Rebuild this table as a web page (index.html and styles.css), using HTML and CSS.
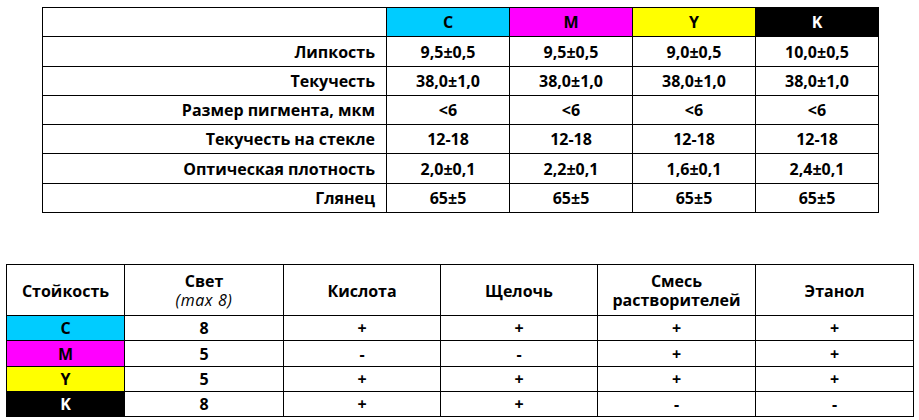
FILE: index.html
```html
<!DOCTYPE html>
<html lang="ru">
<head>
<meta charset="utf-8">
<title>Характеристики красок</title>
<link rel="stylesheet" href="styles.css">
</head>
<body>
<div class="page">
  <table class="props">
    <colgroup>
      <col class="c-label"><col class="c-val"><col class="c-val"><col class="c-val"><col class="c-val">
    </colgroup>
    <tr class="r29">
      <td></td>
      <td class="ink cyan">C</td>
      <td class="ink magenta">M</td>
      <td class="ink yellow">Y</td>
      <td class="ink black">K</td>
    </tr>
    <tr class="r30"><td class="label">Липкость</td><td>9,5±0,5</td><td>9,5±0,5</td><td>9,0±0,5</td><td>10,0±0,5</td></tr>
    <tr class="r29"><td class="label">Текучесть</td><td>38,0±1,0</td><td>38,0±1,0</td><td>38,0±1,0</td><td>38,0±1,0</td></tr>
    <tr class="r29"><td class="label">Размер пигмента, мкм</td><td>&lt;6</td><td>&lt;6</td><td>&lt;6</td><td>&lt;6</td></tr>
    <tr class="r29"><td class="label">Текучесть на стекле</td><td>12-18</td><td>12-18</td><td>12-18</td><td>12-18</td></tr>
    <tr class="r30"><td class="label">Оптическая плотность</td><td>2,0±0,1</td><td>2,2±0,1</td><td>1,6±0,1</td><td>2,4±0,1</td></tr>
    <tr class="r29"><td class="label">Глянец</td><td>65±5</td><td>65±5</td><td>65±5</td><td>65±5</td></tr>
  </table>

  <table class="resist">
    <colgroup>
      <col class="k1"><col class="k2"><col class="k3"><col class="k4"><col class="k5"><col class="k6">
    </colgroup>
    <tr class="head">
      <td>Стойкость</td>
      <td><span class="line">Свет</span><span class="line note">(max 8)</span></td>
      <td>Кислота</td>
      <td>Щелочь</td>
      <td><span class="line">Смесь</span><span class="line">растворителей</span></td>
      <td>Этанол</td>
    </tr>
    <tr class="r25"><td class="ink cyan">C</td><td>8</td><td>+</td><td>+</td><td>+</td><td>+</td></tr>
    <tr class="r26"><td class="ink magenta">M</td><td>5</td><td>-</td><td>-</td><td>+</td><td>+</td></tr>
    <tr class="r25"><td class="ink yellow">Y</td><td>5</td><td>+</td><td>+</td><td>+</td><td>+</td></tr>
    <tr class="r25"><td class="ink black">K</td><td>8</td><td>+</td><td>+</td><td>-</td><td>-</td></tr>
  </table>
</div>
</body>
</html>
```

FILE: styles.css
```css
html, body {
  margin: 0;
  padding: 0;
  background: #ffffff;
}

.page {
  display: flex;
  flex-direction: column;
  align-items: flex-start;
  padding-top: 7px;
  font-family: "Open Sans", "Liberation Sans", sans-serif;
  font-weight: 700;
  font-size: 16px;
  color: #000;
}

table {
  border-collapse: collapse;
  table-layout: fixed;
}

td {
  border: 1px solid #000;
  padding: 0;
  text-align: center;
  vertical-align: middle;
  line-height: 18px;
  white-space: nowrap;
}

.props {
  margin-left: 42px;
  width: 837px;
}

.props .c-label { width: 344px; }
.props .c-val { width: 123px; }

.props .label {
  text-align: right;
  padding-right: 11px;
}

.r29 td { height: 28px; }
.r30 td { height: 29px; }
.r25 td { height: 24px; }
.r26 td { height: 25px; }

.resist {
  margin-top: 51px;
  margin-left: 6px;
  width: 907px;
}

.resist .k1 { width: 118px; }
.resist .k2 { width: 159px; }
.resist .k3 { width: 157px; }
.resist .k4 { width: 157px; }
.resist .k5 { width: 158px; }
.resist .k6 { width: 158px; }

.resist .head td {
  height: 49px;
  padding-top: 1px;
}

.line {
  display: block;
  line-height: 19px;
}

.note {
  font-style: italic;
  font-weight: 400;
  letter-spacing: 0.6px;
}

.cyan { background: #00ccff; }
.magenta { background: #ff00ff; }
.yellow { background: #ffff00; }
.black { background: #000000; color: #ffffff; }
```
